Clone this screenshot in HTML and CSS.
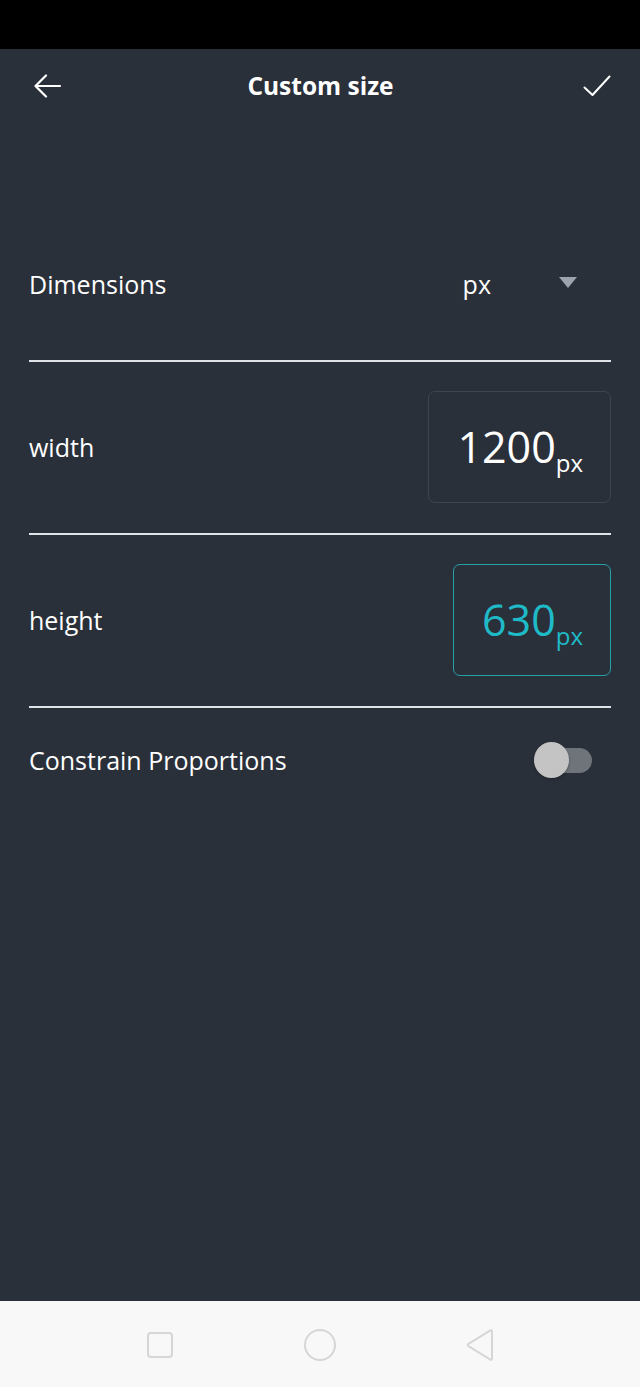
FILE: index.html
```html
<!DOCTYPE html>
<html lang="en">
<head>
<meta charset="utf-8">
<title>Custom size</title>
<link rel="stylesheet" href="styles.css">
</head>
<body>
<div class="screen">
  <div class="statusbar"></div>
  <main class="app">
    <header class="topbar">
      <button class="icon-btn back" aria-label="Back">
        <svg width="28" height="24" viewBox="0 0 28 24"><path d="M26 12H2M12 1.5L1.5 12L12 22.5" fill="none" stroke="#fff" stroke-width="2.2" stroke-linecap="round" stroke-linejoin="round"/></svg>
      </button>
      <h1 class="title">Custom size</h1>
      <button class="icon-btn done" aria-label="Done">
        <svg width="28" height="22" viewBox="0 0 28 22"><path d="M1.5 12.5L9.5 20L26.5 1.5" fill="none" stroke="#fff" stroke-width="2" stroke-linecap="round" stroke-linejoin="round"/></svg>
      </button>
    </header>

    <section class="form">
      <div class="row row-dim">
        <span class="label">Dimensions</span>
        <div class="unit-select">
          <span class="unit">px</span>
          <svg class="caret" width="18" height="11" viewBox="0 0 18 11"><path d="M0 0H18L9 11Z" fill="#9ba3ad"/></svg>
        </div>
      </div>
      <div class="divider"></div>
      <div class="row row-field">
        <span class="label">width</span>
        <div class="field"><span class="num">1200</span><span class="sub">px</span></div>
      </div>
      <div class="divider"></div>
      <div class="row row-field">
        <span class="label">height</span>
        <div class="field active"><span class="num">630</span><span class="sub">px</span></div>
      </div>
      <div class="divider"></div>
      <div class="row row-toggle">
        <span class="label">Constrain Proportions</span>
        <div class="switch"><div class="track"></div><div class="thumb"></div></div>
      </div>
    </section>
  </main>
  <nav class="navbar">
    <svg width="28" height="28" viewBox="0 0 28 28"><rect x="2" y="2" width="24" height="24" rx="3" fill="none" stroke="#d6d6d6" stroke-width="2"/></svg>
    <svg width="34" height="34" viewBox="0 0 34 34"><circle cx="17" cy="17" r="15" fill="none" stroke="#d6d6d6" stroke-width="2"/></svg>
    <svg width="30" height="34" viewBox="0 0 30 34"><path d="M26 3.5V30.5Q26 32.5 24 31.3L2.5 18.2Q1 17 2.5 15.8L24 2.7Q26 1.5 26 3.5Z" fill="none" stroke="#d6d6d6" stroke-width="2" stroke-linejoin="round"/></svg>
  </nav>
</div>
</body>
</html>
```

FILE: styles.css
```css
* { box-sizing: border-box; }
html, body { margin: 0; padding: 0; }
body {
  font-family: "Open Sans", "Noto Sans", sans-serif;
  background: #000;
}
.screen {
  width: 640px;
  height: 1387px;
  display: flex;
  flex-direction: column;
}
.statusbar {
  height: 49px;
  background: #000;
  flex: none;
}
.app {
  flex: 1;
  background: #2a303a;
  display: flex;
  flex-direction: column;
}
.topbar {
  height: 74px;
  display: grid;
  grid-template-columns: 1fr auto 1fr;
  align-items: center;
  padding: 0 29px 0 34px;
}
.icon-btn {
  background: none;
  border: 0;
  padding: 0;
  width: 28px;
  display: flex;
  align-items: center;
  justify-content: center;
}
.icon-btn.done { justify-self: end; }
.title {
  margin: 0 0 2px;
  color: #fff;
  font-size: 24.5px;
  font-weight: 700;
  letter-spacing: 0;
  transform: translateX(-2px);
}
.form {
  padding: 0 29px;
  margin-top: 84px;
}
.row {
  display: flex;
  align-items: center;
  justify-content: space-between;
}
.label {
  color: #fff;
  font-size: 25px;
}
.row-dim {
  height: 153px;
}
.unit-select {
  display: flex;
  align-items: center;
  gap: 68px;
  padding-right: 34px;
}
.unit {
  color: #fff;
  font-size: 25px;
}
.caret { margin-top: -2px; }
.divider {
  height: 2px;
  background: #dfe3e8;
}
.row-field {
  padding: 29px 0 30px;
}
.field {
  height: 112px;
  border: 1.5px solid #3e4550;
  border-radius: 7px;
  display: flex;
  align-items: baseline;
  justify-content: center;
  padding: 0 27px 0 28px;
  color: #fff;
  line-height: 110px;
}
.field.active {
  border-color: #23a3a9;
  color: #1fbac7;
}
.num {
  font-size: 43px;
}
.sub {
  font-size: 24px;
  position: relative;
  top: 9px;
}
.row-toggle {
  height: 104px;
}
.switch {
  position: relative;
  width: 58px;
  height: 36px;
  margin-right: 19px;
}
.track {
  position: absolute;
  left: 0;
  right: 0;
  top: 6px;
  height: 25px;
  border-radius: 13px;
  background: #6f747b;
}
.thumb {
  position: absolute;
  left: 0;
  top: 0;
  width: 35px;
  height: 36px;
  border-radius: 50%;
  background: #c4c4c4;
  box-shadow: 0 1px 3px rgba(0,0,0,0.3);
}
.navbar {
  height: 86px;
  flex: none;
  background: #f8f8f8;
  display: flex;
  align-items: center;
  justify-content: center;
  gap: 129px;
  padding: 1px 0 0 2px;
}
```
